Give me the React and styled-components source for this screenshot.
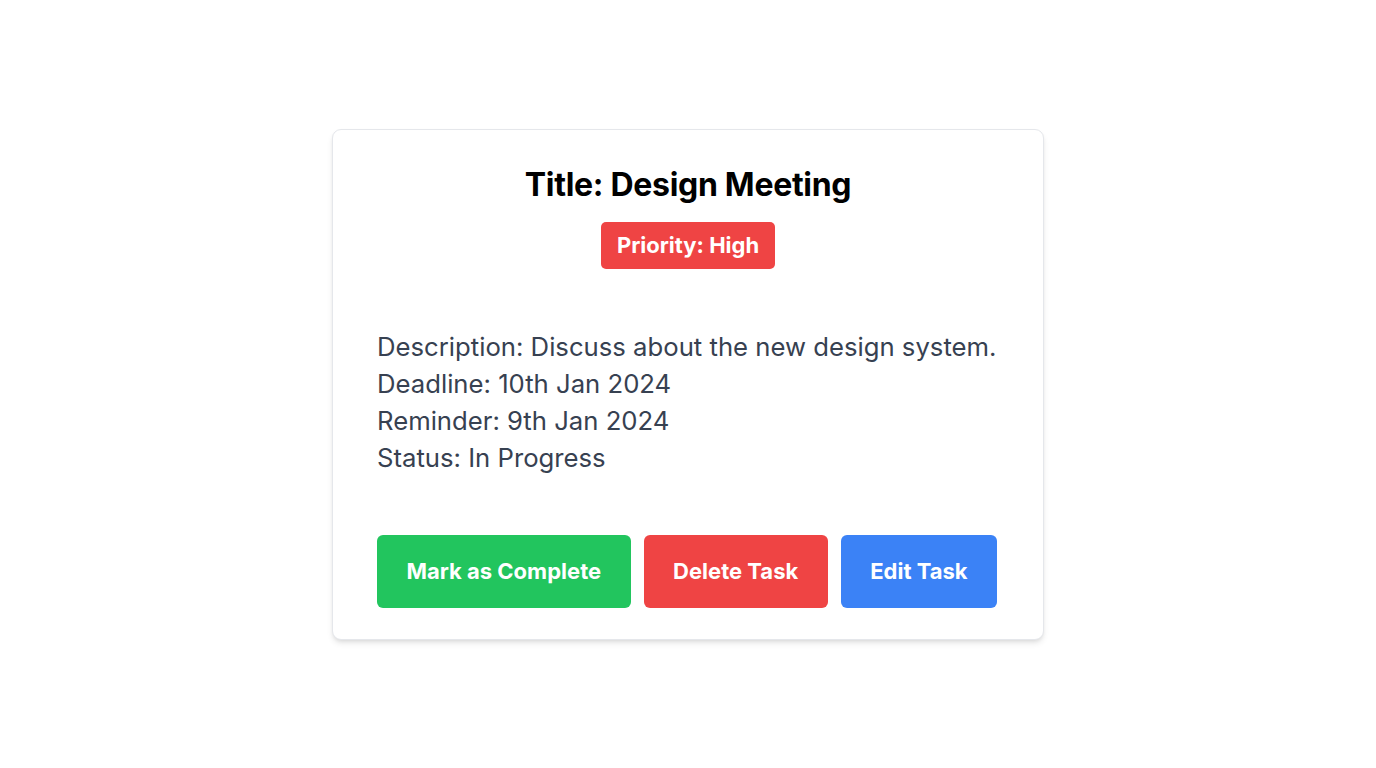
import React from 'react';
import styled, { createGlobalStyle } from 'styled-components';

const GlobalStyle = createGlobalStyle`
  html, body {
    margin: 0;
    padding: 0;
    background: #ffffff;
  }
  body {
    font-family: Inter, "Noto Sans", sans-serif;
  }
`;

const Page = styled.div`
  width: 1376px;
  height: 768px;
  display: flex;
  justify-content: center;
  align-items: flex-start;
  padding-top: 129px;
  box-sizing: border-box;
`;

const Card = styled.div`
  width: 712px;
  box-sizing: border-box;
  padding: 37px 44px 31px;
  background: #fff;
  border: 1px solid #e5e7eb;
  border-radius: 9px;
  box-shadow: 0 4px 6px -1px rgba(0, 0, 0, 0.1), 0 2px 4px -2px rgba(0, 0, 0, 0.1);
  display: flex;
  flex-direction: column;
  align-items: center;
`;

const Title = styled.h2`
  margin: 0;
  font-family: Inter, sans-serif;
  font-weight: 700;
  font-size: 32px;
  line-height: 36px;
  color: #000;
  letter-spacing: -0.3px;
`;

const Badge = styled.span`
  margin-top: 19px;
  padding: 12px 16px;
  border-radius: 5px;
  background: ${({ color }) => color};
  color: #fff;
  font-family: Inter, sans-serif;
  font-weight: 700;
  font-size: 22px;
  line-height: 23px;
`;

const Details = styled.div`
  align-self: stretch;
  margin-top: 59px;
  display: flex;
  flex-direction: column;
`;

const Line = styled.p`
  margin: 0;
  font-family: Inter, sans-serif;
  font-size: 25.7px;
  line-height: 37px;
  color: #374151;
  white-space: nowrap;
`;

const Actions = styled.div`
  align-self: stretch;
  margin-top: 59px;
  display: flex;
  gap: 13px;
`;

const Button = styled.button`
  border: none;
  border-radius: 6px;
  padding: 25px 29.5px;
  background: ${({ bg }) => bg};
  color: #fff;
  font-family: Inter, sans-serif;
  font-weight: 700;
  font-size: 22px;
  line-height: 23px;
  white-space: nowrap;
  cursor: pointer;
`;

export default function App() {
  return (
    <>
      <GlobalStyle />
      <Page>
        <Card>
          <Title>Title: Design Meeting</Title>
          <Badge color="#ef4444">Priority: High</Badge>
          <Details>
            <Line>Description: Discuss about the new design system.</Line>
            <Line>Deadline: 10th Jan 2024</Line>
            <Line>Reminder: 9th Jan 2024</Line>
            <Line>Status: In Progress</Line>
          </Details>
          <Actions>
            <Button bg="#22c55e">Mark as Complete</Button>
            <Button bg="#ef4444">Delete Task</Button>
            <Button bg="#3b82f6">Edit Task</Button>
          </Actions>
        </Card>
      </Page>
    </>
  );
}
